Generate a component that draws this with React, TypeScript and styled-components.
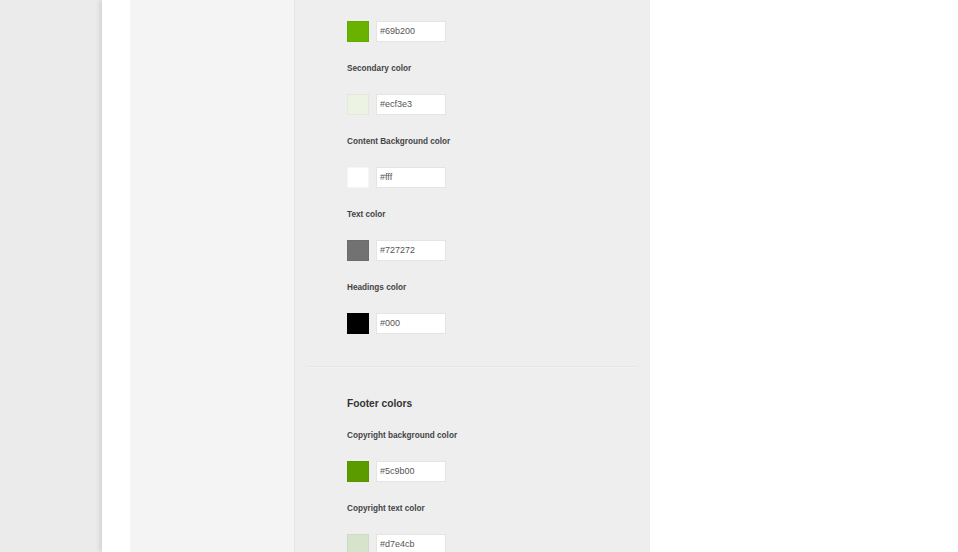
import React from "react";
import styled, { createGlobalStyle } from "styled-components";

const Global = createGlobalStyle`
  html, body { margin: 0; padding: 0; background: #ebebeb; }
  body { font-family: "Liberation Sans", Arial, sans-serif; overflow: hidden; }
`;

const Screen = styled.div`
  display: flex;
  width: 958px;
  height: 552px;
  overflow: hidden;
`;

const Gutter = styled.div`
  width: 102px;
  flex: none;
  background: #ebebeb;
`;

const Page = styled.div`
  flex: 1;
  display: flex;
  background: #ffffff;
  box-shadow: -2px 0 5px rgba(0, 0, 0, 0.12);
`;

const Strip = styled.div`
  width: 28px;
  flex: none;
  background: #ffffff;
`;

const Sidebar = styled.div`
  width: 164px;
  flex: none;
  background: #f4f4f4;
  border-right: 1px solid #e8e8e8;
`;

const Panel = styled.div`
  width: 355px;
  flex: none;
  background: #eeeeee;
  padding: 21px 13px 0 12px;
  box-sizing: border-box;
`;

const Group = styled.div`
  padding-left: 40px;
  display: flex;
  flex-direction: column;
  gap: 20px;
`;

const Row = styled.div`
  display: flex;
  align-items: center;
  gap: 7px;
  height: 21px;
`;

const Swatch = styled.div<{ $c: string }>`
  width: 22px;
  height: 21px;
  box-sizing: border-box;
  background: ${(p) => p.$c};
  border: 1px solid rgba(0, 0, 0, 0.04);
`;

const Input = styled.div`
  width: 70px;
  height: 21px;
  box-sizing: border-box;
  background: #ffffff;
  border: 1px solid #e4e4e4;
  font-size: 9px;
  color: #555;
  line-height: 19px;
  padding-left: 3px;
`;

const Label = styled.div`
  font-size: 8.2px;
  font-weight: bold;
  color: #444;
  line-height: 12px;
  margin: 1px 0 -1px;
`;

const Divider = styled.div`
  height: 1px;
  background: #e5e5e5;
  border-bottom: 1px solid #f2f2f2;
  margin: 32px 0 29px;
`;

const Heading = styled.div`
  font-size: 10.2px;
  font-weight: bold;
  color: #333;
  line-height: 14px;
  margin-bottom: -2px;
`;

const Rest = styled.div`
  flex: 1;
  background: #ffffff;
`;

const ColorRow = ({ c }: { c: string }) => (
  <Row>
    <Swatch $c={c} />
    <Input>{c}</Input>
  </Row>
);

export default function App() {
  return (
    <>
      <Global />
      <Screen>
        <Gutter />
        <Page>
          <Strip />
          <Sidebar />
          <Panel>
            <Group>
              <ColorRow c="#69b200" />
              <Label>Secondary color</Label>
              <ColorRow c="#ecf3e3" />
              <Label>Content Background color</Label>
              <ColorRow c="#fff" />
              <Label>Text color</Label>
              <ColorRow c="#727272" />
              <Label>Headings color</Label>
              <ColorRow c="#000" />
            </Group>
            <Divider />
            <Group>
              <Heading>Footer colors</Heading>
              <Label>Copyright background color</Label>
              <ColorRow c="#5c9b00" />
              <Label>Copyright text color</Label>
              <ColorRow c="#d7e4cb" />
            </Group>
          </Panel>
          <Rest />
        </Page>
      </Screen>
    </>
  );
}
